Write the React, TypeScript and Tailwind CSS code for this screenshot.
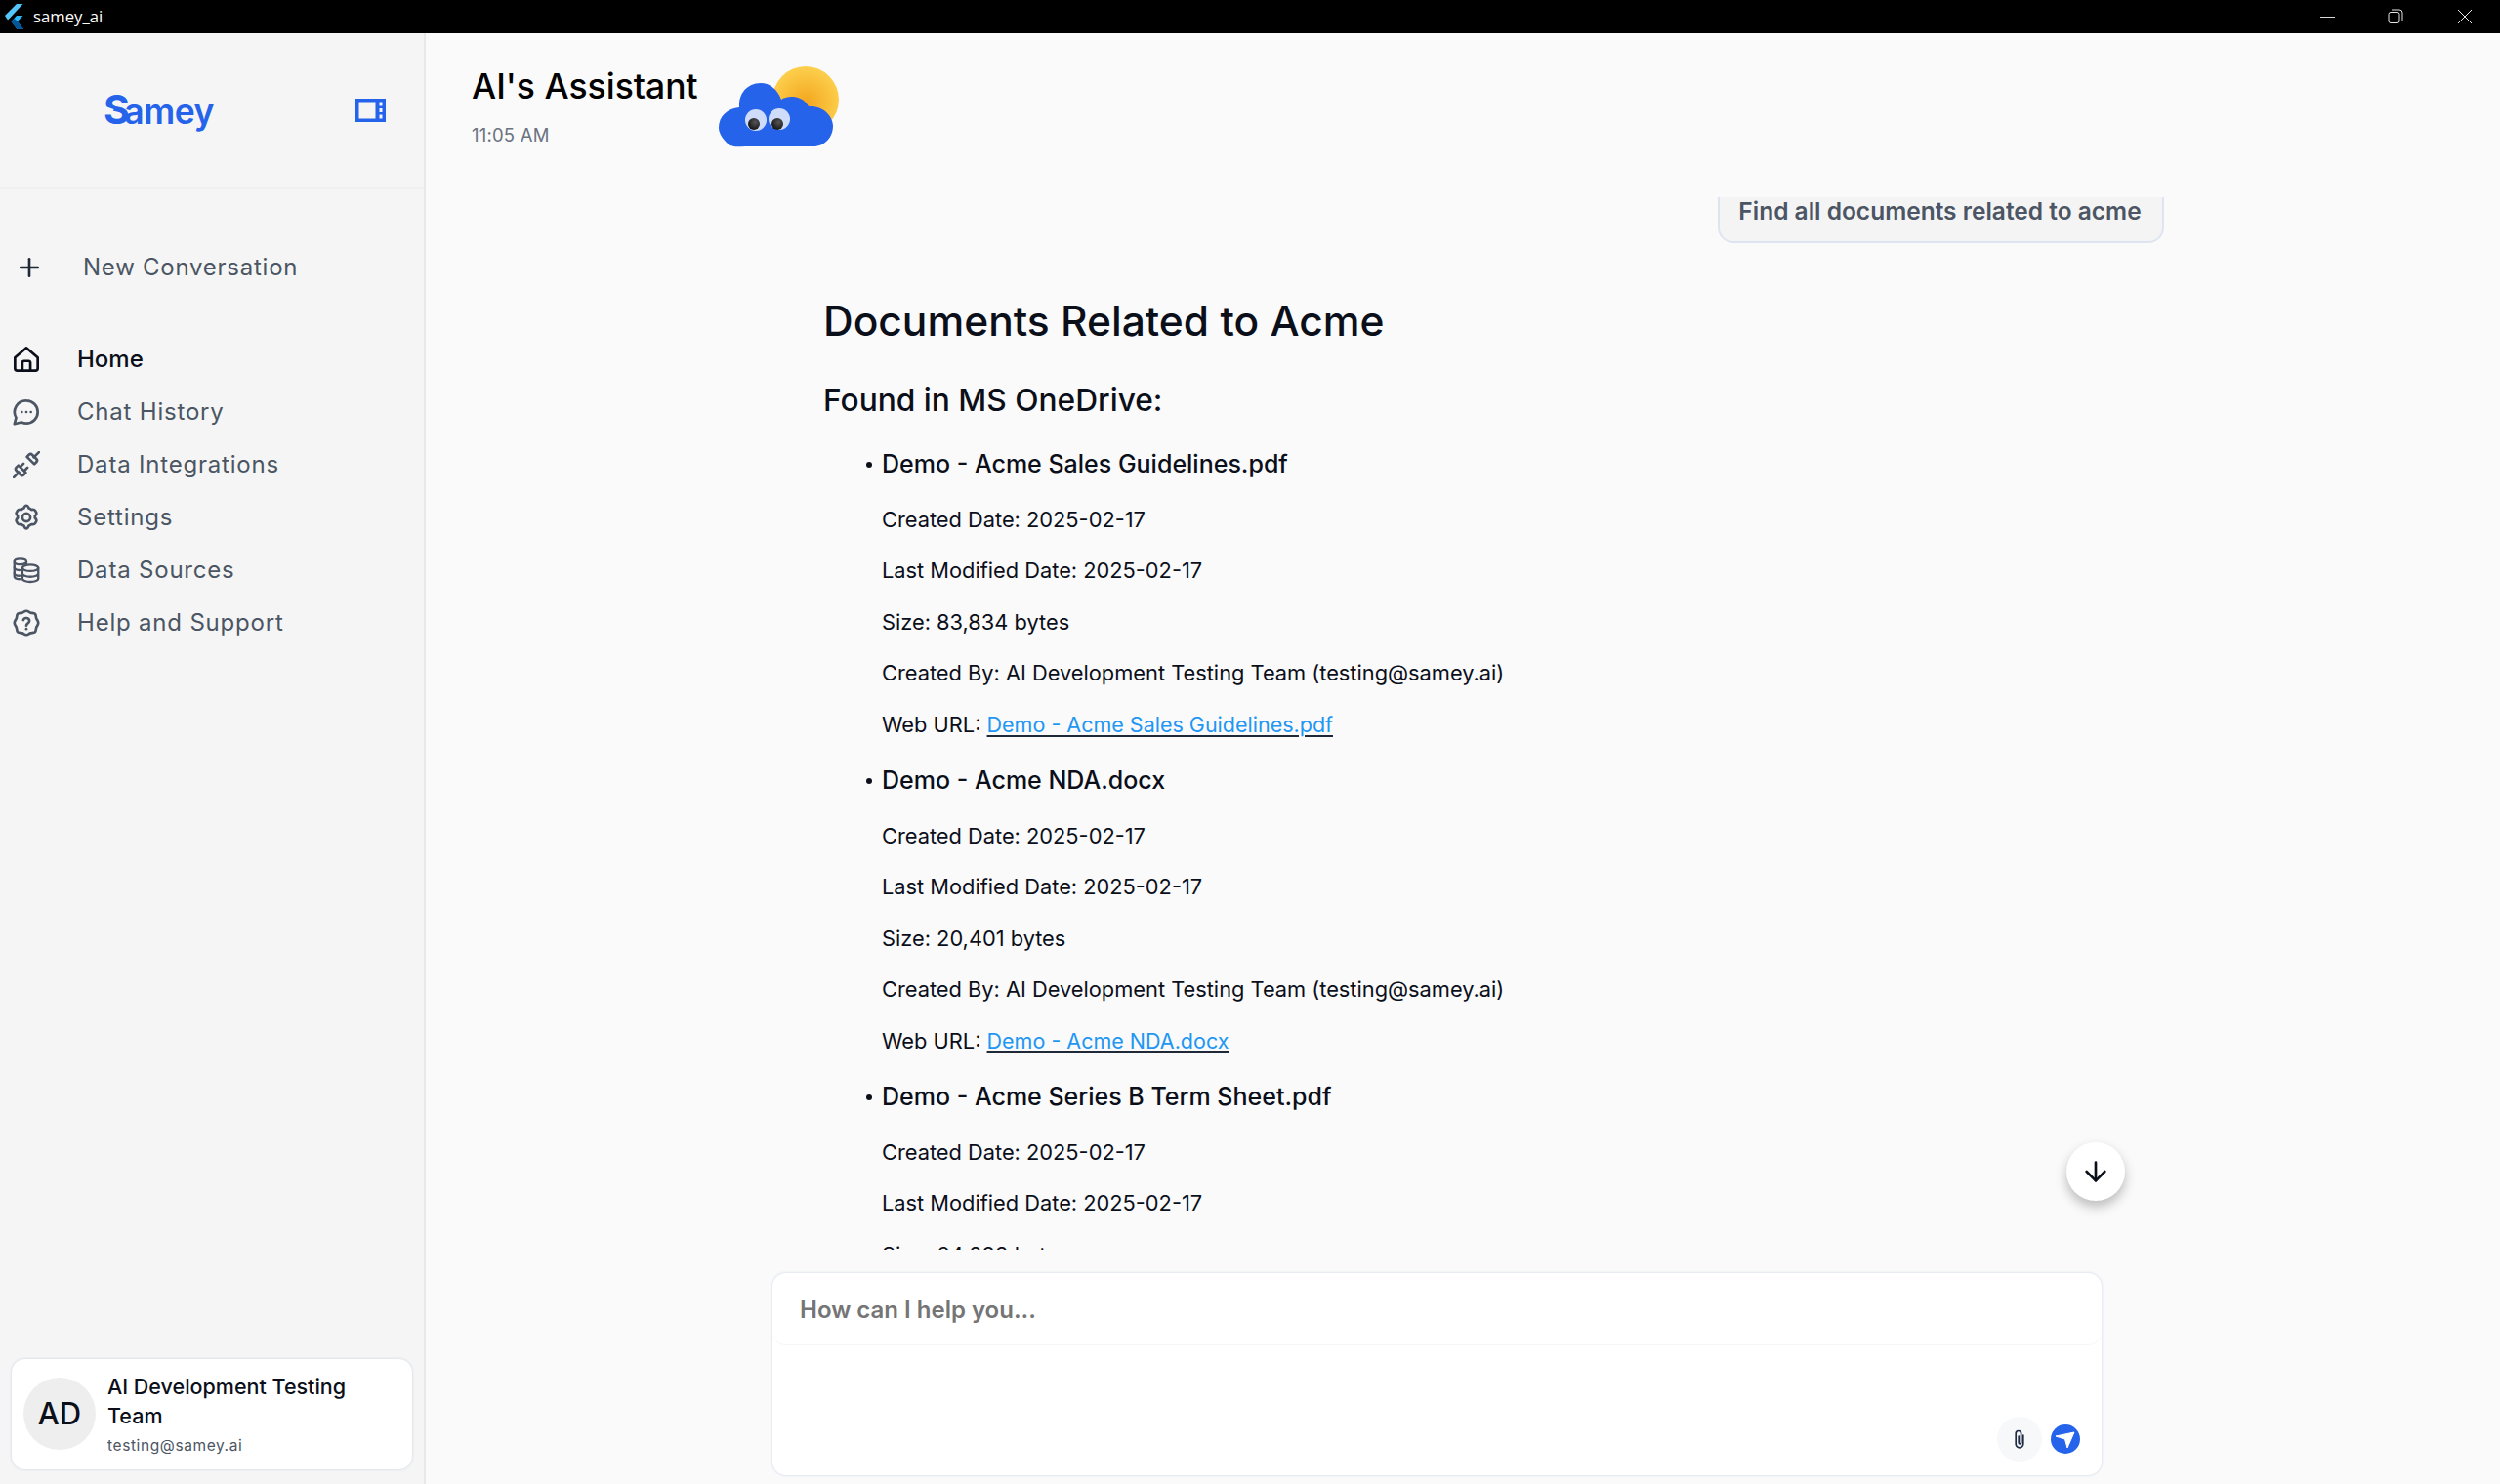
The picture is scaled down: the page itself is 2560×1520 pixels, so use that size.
import { ArrowDown, Plus } from "lucide-react";

const navItems = [
  { label: "Home", active: true, icon: "home" },
  { label: "Chat History", icon: "chat" },
  { label: "Data Integrations", icon: "plug" },
  { label: "Settings", icon: "gear" },
  { label: "Data Sources", icon: "data" },
  { label: "Help and Support", icon: "help" },
];

const docs = [
  { name: "Demo - Acme Sales Guidelines.pdf", size: "83,834" },
  { name: "Demo - Acme NDA.docx", size: "20,401" },
  { name: "Demo - Acme Series B Term Sheet.pdf", size: "64,293" },
];

function NavIcon({ name }: { name: string }) {
  const common = {
    width: 28,
    height: 28,
    viewBox: "0 0 24 24",
    fill: "none",
    stroke: "currentColor",
    strokeWidth: 2.3,
    strokeLinecap: "round" as const,
    strokeLinejoin: "round" as const,
  };
  if (name === "home") {
    return (
      <svg {...common}>
        <path d="M2 10.500 12 2l10 8.500V20a2 2 0 0 1-2 2H4a2 2 0 0 1-2-2z" />
        <path d="M8.500 22v-7a1.500 1.500 0 0 1 1.500-1.500h4a1.500 1.500 0 0 1 1.500 1.500v7" />
      </svg>
    );
  }
  if (name === "chat") {
    return (
      <svg {...common}>
        <path d="M12 2a10 10 0 0 1 0 20c-1.600 0-3.100-.4-4.400-1L1.500 22.500 3 17a10 10 0 0 1 9-15z" />
        <path d="M8 12h.01M12 12h.01M16 12h.01" />
      </svg>
    );
  }
  if (name === "plug") {
    return (
      <svg {...common}>
        <path d="m1 23 4.500-4.500M18.500 5.500 23 1" />
        <path d="m5 12.500 6.500 6.500-1.800 1.800a2 2 0 0 1-2.800 0l-3.700-3.700a2 2 0 0 1 0-2.800z" />
        <path d="m12.500 5 6.500 6.500 1.800-1.800a2 2 0 0 0 0-2.800l-3.700-3.700a2 2 0 0 0-2.800 0z" />
        <path d="m9.500 11-2.200 2.200M13 14.500l-2.200 2.200" />
      </svg>
    );
  }
  if (name === "gear") {
    return (
      <svg {...common}>
        <path d="M12 1.500c1.300 0 1.700 1 2.200 2.400.8.300 1.600.700 2.200 1.300 1.500-.2 2.600-.5 3.300.7l1 1.800c.7 1.200-.2 2-1.200 3.100.1.400.1 1.200 0 1.600 1 1.100 1.900 1.900 1.200 3.100l-1 1.800c-.7 1.200-1.800.9-3.300.7-.6.600-1.400 1-2.200 1.300-.5 1.400-.9 2.400-2.200 2.400s-1.700-1-2.200-2.400c-.8-.3-1.600-.7-2.200-1.300-1.500.2-2.600.5-3.300-.7l-1-1.800c-.7-1.200.2-2 1.200-3.100-.1-.4-.1-1.200 0-1.600-1-1.100-1.900-1.900-1.200-3.100l1-1.800c.7-1.200 1.800-.9 3.300-.7.600-.6 1.400-1 2.200-1.300.5-1.400.9-2.400 2.200-2.400z" />
        <circle cx="12" cy="12" r="3.500" />
      </svg>
    );
  }
  if (name === "data") {
    return (
      <svg {...common} strokeWidth={2}>
        <path d="M12 6.500v-2C12 3 9.500 2 6.500 2S1.500 3 1.500 4.500v13c0 1.300 1.800 2.200 4.500 2.400" />
        <path d="M1.500 4.500C1.500 6 3.500 7 6.500 7c2 0 3.500-.3 4.500-1M1.500 9.500C1.500 11 3.500 12 6 12M1.500 14.500c0 1.300 1.800 2.300 4.500 2.400" />
        <ellipse cx="15.500" cy="10" rx="7" ry="2.800" />
        <path d="M8.500 10v9.500c0 1.500 3.100 2.800 7 2.800s7-1.300 7-2.800V10M8.500 15c0 1.500 3.100 2.800 7 2.800s7-1.300 7-2.800" />
      </svg>
    );
  }
  return (
    <svg {...common}>
      <path d="M12 1.500c1.600 0 2.500 1.200 3.700 1.600 1.300.4 2.800 0 3.900 1 1 1 .7 2.500 1.100 3.800.4 1.200 1.800 2.400 1.800 4.100s-1.400 2.900-1.800 4.100c-.4 1.300-.1 2.800-1.100 3.800-1.100 1-2.600.6-3.900 1-1.200.4-2.100 1.600-3.700 1.600s-2.500-1.200-3.700-1.600c-1.300-.4-2.800 0-3.900-1-1-1-.7-2.500-1.100-3.800C2.900 14.900 1.500 13.700 1.500 12s1.400-2.900 1.800-4.100c.4-1.300.1-2.800 1.100-3.800 1.100-1 2.600-.6 3.900-1C9.500 2.700 10.400 1.500 12 1.500z" />
      <path d="M9.300 9.500a2.800 2.800 0 0 1 5.400.8c0 1.900-2.700 2.400-2.700 4" />
      <path d="M12 17.300h.01" />
    </svg>
  );
}

function CloudMascot() {
  return (
    <svg width="130" height="86" viewBox="0 0 130 86">
      <defs>
        <radialGradient id="sun" cx="0.5" cy="0.55" r="0.55">
          <stop offset="0" stopColor="#f3a51e" />
          <stop offset="1" stopColor="#fdd04d" />
        </radialGradient>
        <radialGradient id="pupil" cx="0.6" cy="0.35" r="0.7">
          <stop offset="0" stopColor="#555" />
          <stop offset="1" stopColor="#111" />
        </radialGradient>
      </defs>
      <circle cx="92" cy="35" r="34" fill="url(#sun)" />
      <path
        d="M15 82C10 79 3 71 3 64 3 52 12 44 24 43 23 28 33 18 46 18 55 18 63 24 67 35 72 31 88 29 95 42 110 41 120 52 120 62 120 74 111 83 100 83H30C24 83 20 84 15 82Z"
        fill="#2563eb"
      />
      <ellipse cx="41" cy="56" rx="11" ry="11" fill="#cfdcf9" />
      <ellipse cx="65" cy="55" rx="11" ry="11" fill="#cfdcf9" />
      <circle cx="39" cy="60" r="6" fill="url(#pupil)" />
      <circle cx="63" cy="60" r="6" fill="url(#pupil)" />
    </svg>
  );
}

export default function App() {
  return (
    <div className="flex h-[1520px] w-[2560px] flex-col overflow-hidden bg-[#fafafa] font-['Inter',sans-serif]">
      {/* title bar */}
      <div className="flex h-[34px] shrink-0 items-center bg-black">
        <svg className="ml-[5px]" width="20" height="26" viewBox="0 0 20 26">
          <path d="M12 0h6.500L6 13.500 3 16.500 0 12z" fill="#54c5f8" />
          <path d="M18.500 12H12L6.500 18l6 8h6.500l-6-8z" fill="#29b6f6" />
          <path d="m6.500 18 6 8h6.500l-6-8-3.200-3z" fill="#01579b" />
        </svg>
        <span className="ml-[9px] font-['Open_Sans',sans-serif] text-[16.700px] text-white">samey_ai</span>
        <div className="ml-auto flex items-center">
          <div className="mr-[54px] h-px w-[15px] bg-[#d8d8d8]" />
          <svg className="mr-[55px]" width="16" height="16" viewBox="0 0 16 16" fill="none" stroke="#e5e5e5" strokeWidth="1">
            <rect x="1" y="3.500" width="11" height="11" rx="2" />
            <path d="M4 1h8a3 3 0 0 1 3 3v8" />
          </svg>
          <svg className="mr-[28px]" width="16" height="16" viewBox="0 0 16 16" fill="none" stroke="#e5e5e5" strokeWidth="1">
            <path d="m1 1 14 14M15 1 1 15" />
          </svg>
        </div>
      </div>

      <div className="flex min-h-0 flex-1">
        {/* sidebar */}
        <aside className="flex w-[436px] shrink-0 flex-col border-r-2 border-[#e9e9e9] bg-[#f5f5f5]">
          <div className="flex h-[160px] shrink-0 items-center border-b-2 border-[#f0f0f0]">
            <span className="relative ml-[106px] w-[113px] text-[35.500px] font-semibold leading-[44px] tracking-[-0.5px] text-[#2563eb]">
              <span className="mr-[-5px] text-[41px] font-bold leading-[44px]">S</span>
              amey
              <span className="absolute left-[-1px] top-[20px] h-[5px] w-[11px] rotate-[20deg] bg-[#f5f5f5]" />
            </span>
            <svg className="ml-[145px]" width="31" height="24" viewBox="0 0 31 24">
              <path d="M0 0h31v24H0zM3.500 3.500v17h17v-17zM24.500 3.500v4h3v-4zM24.500 10v4h3v-4zM24.500 16.500v4h3v-4z" fill="#2563eb" fillRule="evenodd" />
            </svg>
          </div>
          <div className="mt-[62px] flex items-center text-[#4b5563]">
            <Plus className="ml-[15px] text-[#1f2937]" size={30} strokeWidth={2.1} />
            <span className="ml-[40px] text-[24px] tracking-[0.75px]">New Conversation</span>
          </div>
          <nav className="mt-[49px] flex flex-col">
            {navItems.map((item) => (
              <div
                key={item.label}
                className={`flex h-[54px] items-center ${item.active ? "text-[#0b0f1a]" : "text-[#4b5563]"}`}
              >
                <span className="ml-[13px] flex w-[28px]">
                  <NavIcon name={item.icon} />
                </span>
                <span className={`ml-[38px] text-[24px] ${item.active ? "font-medium" : "tracking-[0.8px]"}`}>
                  {item.label}
                </span>
              </div>
            ))}
          </nav>
          <div className="mx-[12px] mb-[15px] mt-auto flex h-[113px] rounded-[14px] bg-white shadow-[0_0_3px_#c5d0e2]">
            <div className="ml-[12px] mt-[19px] flex h-[74px] w-[74px] shrink-0 items-center justify-center rounded-full bg-[#eeeeee] text-[31px] font-medium text-[#0b0f1a]">
              AD
            </div>
            <div className="ml-[12px] mt-[13px] w-[270px]">
              <div className="text-[21.500px] font-medium leading-[30px] text-[#0b0f1a]">AI Development Testing Team</div>
              <div className="mt-[6px] text-[15.500px] leading-[20px] tracking-[0.6px] text-[#4b5563]">testing@samey.ai</div>
            </div>
          </div>
        </aside>

        {/* main */}
        <main className="relative flex min-w-0 flex-1 flex-col">
          <header className="flex h-[168px] shrink-0 items-start pl-[47px]">
            <div className="pt-[29px]">
              <h1 className="text-[35.500px] font-medium leading-[52px] text-black">AI's Assistant</h1>
              <div className="mt-[12px] text-[18.500px] leading-[22px] tracking-[0.2px] text-[#6b7280]">11:05 AM</div>
            </div>
            <div className="ml-[18px] mt-[33px]">
              <CloudMascot />
            </div>
          </header>

          <div className="relative h-[1078px] shrink-0 overflow-hidden">
            <div className="-mt-[18px] flex justify-end pr-[344px]">
              <div className="flex h-[65px] w-[457px] items-center justify-center rounded-[16px] border-2 border-[#dfe5f0] bg-[#f4f4f5] pb-[1px] pr-[2px] text-[24.500px] font-semibold text-[#4b5563]">
                Find all documents related to acme
              </div>
            </div>
            <div className="pl-[407px] pt-[50px] text-[#0b0f1a]">
              <h2 className="text-[42.500px] font-medium leading-[60px]">Documents Related to Acme</h2>
              <h3 className="mt-[31px] text-[31.700px] font-medium leading-[40px]">Found in MS OneDrive:</h3>
              <div className="pt-[3.500px]">
                {docs.map((doc) => (
                  <div key={doc.name} className="pl-[60px]">
                    <div className="relative mt-[23.500px] text-[25px] font-medium leading-[36px]">
                      <span className="absolute left-[-16px] top-[16px] h-[6px] w-[6px] rounded-full bg-[#0b0f1a]" />
                      {doc.name}
                    </div>
                    <div className="mt-[22.500px] flex flex-col gap-[20.500px] text-[21.800px] leading-[32px]">
                      <div>Created Date: 2025-02-17</div>
                      <div>Last Modified Date: 2025-02-17</div>
                      <div>Size: {doc.size} bytes</div>
                      <div>Created By: AI Development Testing Team (testing@samey.ai)</div>
                      <div>
                        Web URL:{" "}
                        <span className="text-[21.500px] text-[#2196f3] underline decoration-[#1f2937] underline-offset-[3px]">{doc.name}</span>
                      </div>
                    </div>
                  </div>
                ))}
              </div>
            </div>
            <button className="absolute left-[1680px] top-[968px] flex h-[60px] w-[60px] items-center justify-center rounded-full bg-white shadow-[0_6px_12px_rgba(0,0,0,0.25)]">
              <ArrowDown size={32} strokeWidth={2} className="text-[#0b0f1a]" />
            </button>
          </div>

          <div className="ml-[355px] mt-[24px] flex h-[207px] w-[1361px] flex-col rounded-[14px] bg-white shadow-[0_0_3px_#c5d0e2]">
            <div className="flex h-[73px] shrink-0 items-center rounded-[14px] pl-[28px] pt-[2px] shadow-[0_1px_1px_#f5f5f5]">
              <span className="text-[24px] font-semibold text-[#757575]">How can I help you...</span>
            </div>
            <div className="mb-[14px] mr-[22px] mt-auto flex items-center justify-end gap-[9px]">
              <div className="flex h-[46px] w-[46px] items-center justify-center rounded-full bg-[#f7f8fa]">
                <svg width="10" height="20" viewBox="0 0 10 20" fill="none" stroke="#1f2a44" strokeWidth="1.700" strokeLinecap="round">
                  <path d="M8.800 6v9a3.800 3.800 0 0 1-7.600 0V4.200a2.700 2.700 0 0 1 5.400 0v9.500a1.200 1.200 0 0 1-2.400 0V7" />
                </svg>
              </div>
              <div className="flex h-[30px] w-[30px] items-center justify-center rounded-full bg-[#2563eb]">
                <svg width="30" height="30" viewBox="0 0 30 30">
                  <path d="M5 12 24 8 17 24 14.500 15z" fill="white" strokeLinejoin="round" stroke="white" strokeWidth="1" />
                </svg>
              </div>
            </div>
          </div>
        </main>
      </div>
    </div>
  );
}
